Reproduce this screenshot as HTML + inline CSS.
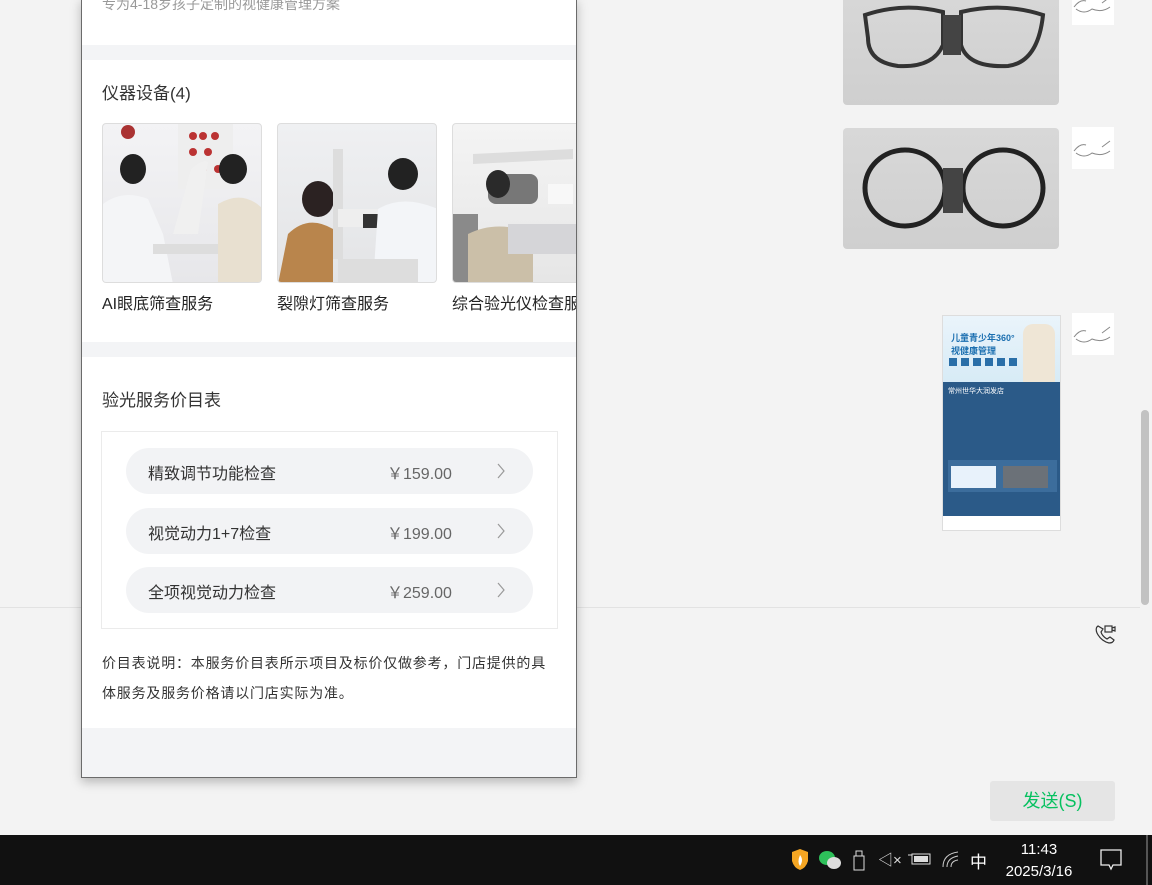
<!DOCTYPE html>
<html><head><meta charset="utf-8"><style>
*{margin:0;padding:0;box-sizing:border-box}
body{width:1152px;height:885px;overflow:hidden;background:#f3f3f3;font-family:"Liberation Sans","Noto Sans CJK SC",sans-serif;position:relative}
.abs{position:absolute}
.phone{left:81px;top:-2px;width:496px;height:780px;background:#fff;border:1px solid #6b6b6b;box-shadow:0 4px 10px rgba(0,0,0,.25);overflow:hidden}
.gray{background:#f3f4f6;left:0;width:100%}
.row{position:absolute;left:24px;width:407px;height:46px;border-radius:23px;background:#f2f3f5;font-size:16px;color:#333}
.row .n{position:absolute;left:22px;top:12px}
.row .p{position:absolute;left:261px;top:12px;color:#666}
.row .c{position:absolute;left:370px;top:15px}
.cap{font-size:16px;color:#222}
.img{width:160px;height:160px;border-radius:4px;border:1px solid #ddd;overflow:hidden}
</style></head><body>
<div class="abs" style="left:0;top:607px;width:1140px;height:1px;background:#e2e2e2"></div>
<div class="abs" style="left:1141px;top:410px;width:8px;height:195px;background:#c2c2c2;border-radius:4px"></div>

<div class="abs" style="left:843px;top:-10px;width:216px;height:115px;background:linear-gradient(#d8d8d8,#cfcfcf);border-radius:4px;overflow:hidden">
<svg width="216" height="115"><g fill="none" stroke="#333" stroke-width="4"><path d="M22 25 Q60 12 100 22 L100 55 Q90 78 55 76 Q25 72 25 48Z"/><path d="M118 22 Q160 12 200 25 Q195 72 165 76 Q125 78 118 55Z"/></g><rect x="100" y="25" width="18" height="40" fill="#444"/></svg></div>
<div class="abs" style="left:843px;top:128px;width:216px;height:121px;background:linear-gradient(#d8d8d8,#cfcfcf);border-radius:4px;overflow:hidden">
<svg width="216" height="121"><g fill="none" stroke="#222" stroke-width="5"><ellipse cx="62" cy="60" rx="40" ry="38"/><ellipse cx="160" cy="60" rx="40" ry="38"/></g><rect x="100" y="40" width="20" height="45" fill="#444"/></svg></div>
<div class="abs" style="left:1072px;top:-17px;width:42px;height:42px;background:#fff"></div>
<div class="abs" style="left:1072px;top:127px;width:42px;height:42px;background:#fff"></div>
<div class="abs" style="left:1072px;top:313px;width:42px;height:42px;background:#fff"></div>
<svg class="abs" style="left:1072px;top:127px" width="42" height="42"><path d="M2 24 Q8 16 14 18 M4 26 Q12 32 20 26 Q30 30 38 24 M30 20 L38 14" stroke="#888" fill="none"/></svg>
<svg class="abs" style="left:1072px;top:313px" width="42" height="42"><path d="M2 24 Q8 16 14 18 M4 26 Q12 32 20 26 Q30 30 38 24 M30 20 L38 14" stroke="#888" fill="none"/></svg>
<svg class="abs" style="left:1072px;top:-17px" width="42" height="42"><path d="M2 24 Q8 16 14 18 M4 26 Q12 32 20 26 Q30 30 38 24 M30 20 L38 14" stroke="#888" fill="none"/></svg>

<div class="abs" style="left:942px;top:315px;width:119px;height:216px;background:#fff;border:1px solid #ddd;overflow:hidden">
<div class="abs" style="left:0;top:0;width:119px;height:66px;background:linear-gradient(#eaf4fb,#d7ebf6)"></div>
<div class="abs" style="left:8px;top:15px;font-size:9px;color:#1b6fb0;font-weight:bold">儿童青少年360°<br>视健康管理</div>
<div class="abs" style="left:6px;top:42px;width:70px;height:8px;background:repeating-linear-gradient(90deg,#2a6fa8 0 8px,transparent 8px 12px)"></div>
<div class="abs" style="left:80px;top:8px;width:32px;height:58px;background:#efe6d6;border-radius:10px 10px 0 0"></div>
<div class="abs" style="left:0;top:66px;width:119px;height:134px;background:#2b5a88"></div>
<div class="abs" style="left:5px;top:70px;font-size:7px;color:#fff">常州世华大润发店</div>
<div class="abs" style="left:5px;top:144px;width:109px;height:32px;background:#3c6d9c"></div>
<div class="abs" style="left:8px;top:150px;width:45px;height:22px;background:#e8f2fb"></div>
<div class="abs" style="left:60px;top:150px;width:45px;height:22px;background:#6b7178"></div>
</div>

<svg class="abs" style="left:1094px;top:623px" width="24" height="22" fill="none" stroke="#333" stroke-width="1.2"><path d="M4 3 Q1 5 3 10 Q7 18 15 20 Q19 20 20 17 L16 14 L13 16 Q8 13 7 9 L9 6 Z"/><rect x="11" y="3" width="7" height="6"/><path d="M18 5 L21 4 L21 8 L18 7"/></svg>
<div class="abs" style="left:990px;top:781px;width:125px;height:40px;background:#e5e5e5;border-radius:3px;color:#07c160;font-size:18px;text-align:center;line-height:40px">发送(S)</div>

<div class="abs phone">
<div class="abs" style="left:20px;top:-5px;font-size:14px;color:#999">专为4-18岁孩子定制的视健康管理方案</div>
<div class="abs gray" style="top:46px;height:15px"></div>
<div class="abs" style="left:20px;top:80px;font-size:17px;color:#333">仪器设备(4)</div>
<div class="abs img" style="left:20px;top:124px;background:linear-gradient(#f3f3f5,#e7e7ea)">
<svg width="160" height="160"><rect x="75" y="0" width="55" height="65" fill="#eee"/><g fill="#b33"><circle cx="90" cy="12" r="4"/><circle cx="100" cy="12" r="4"/><circle cx="112" cy="12" r="4"/><circle cx="90" cy="28" r="4"/><circle cx="105" cy="28" r="4"/><circle cx="100" cy="45" r="4"/><circle cx="115" cy="45" r="4"/></g><circle cx="25" cy="8" r="7" fill="#a33"/><ellipse cx="30" cy="45" rx="13" ry="15" fill="#222"/><path d="M0 80 Q20 65 45 75 L60 110 L70 160 L0 160Z" fill="#f4f5f7"/><path d="M88 45 Q100 35 105 38 L95 110 L70 110Z" fill="#f0f0f0"/><path d="M50 120 L130 120 L130 130 L50 130Z" fill="#ddd"/><ellipse cx="130" cy="45" rx="14" ry="15" fill="#222"/><path d="M115 80 Q140 65 160 85 L160 160 L115 160Z" fill="#e8e0d0"/></svg></div>
<div class="abs img" style="left:195px;top:124px;background:linear-gradient(#eff0f2,#e3e4e6)">
<svg width="160" height="160"><ellipse cx="40" cy="75" rx="16" ry="18" fill="#2b2222"/><path d="M10 110 Q30 90 55 105 L55 160 L0 160Z" fill="#b9854c"/><rect x="55" y="25" width="10" height="110" fill="#ddd"/><rect x="60" y="85" width="50" height="18" fill="#eee"/><rect x="85" y="90" width="20" height="14" fill="#333"/><ellipse cx="125" cy="50" rx="15" ry="16" fill="#222"/><path d="M100 85 Q125 70 160 85 L160 160 L95 160Z" fill="#f3f5f8"/><rect x="60" y="135" width="80" height="25" fill="#ddd"/></svg></div>
<div class="abs img" style="left:370px;top:124px;width:130px;background:linear-gradient(#f4f4f4,#e6e6e6)">
<svg width="130" height="160"><path d="M20 30 L120 25 L120 35 L20 40Z" fill="#ddd"/><rect x="35" y="50" width="50" height="30" rx="8" fill="#777"/><ellipse cx="45" cy="60" rx="12" ry="14" fill="#2a2a2a"/><rect x="0" y="90" width="25" height="70" fill="#8a8a8a"/><path d="M15 110 Q45 95 80 110 L80 160 L15 160Z" fill="#cbbfa8"/><rect x="55" y="100" width="75" height="30" fill="#d5d5d8"/><rect x="95" y="60" width="25" height="20" fill="#f8f8f8"/></svg></div>
<div class="abs cap" style="left:20px;top:291px">AI眼底筛查服务</div>
<div class="abs cap" style="left:195px;top:291px">裂隙灯筛查服务</div>
<div class="abs cap" style="left:370px;top:291px;white-space:nowrap">综合验光仪检查服务</div>
<div class="abs gray" style="top:343px;height:15px"></div>
<div class="abs" style="left:20px;top:387px;font-size:17px;color:#333">验光服务价目表</div>
<div class="abs" style="left:19px;top:432px;width:457px;height:198px;border:1px solid #ebebeb">
<div class="row" style="top:16px"><span class="n">精致调节功能检查</span><span class="p">￥159.00</span><svg class="c" width="10" height="16"><path d="M2 1 L8 8 L2 15" stroke="#999" fill="none" stroke-width="1.2"/></svg></div>
<div class="row" style="top:76px"><span class="n">视觉动力1+7检查</span><span class="p">￥199.00</span><svg class="c" width="10" height="16"><path d="M2 1 L8 8 L2 15" stroke="#999" fill="none" stroke-width="1.2"/></svg></div>
<div class="row" style="top:135px"><span class="n">全项视觉动力检查</span><span class="p">￥259.00</span><svg class="c" width="10" height="16"><path d="M2 1 L8 8 L2 15" stroke="#999" fill="none" stroke-width="1.2"/></svg></div>
</div>
<div class="abs" style="left:20px;top:649px;width:470px;font-size:14px;color:#333;line-height:30px;white-space:nowrap;letter-spacing:0.8px">价目表说明：本服务价目表所示项目及标价仅做参考，门店提供的具<br>体服务及服务价格请以门店实际为准。</div>
<div class="abs gray" style="top:729px;height:60px"></div>
</div>

<div class="abs" style="left:0;top:835px;width:1152px;height:50px;background:#111"></div>
<svg class="abs" style="left:790px;top:849px" width="20" height="22"><path d="M2 3 L10 0 L18 3 L18 12 Q16 19 10 21 Q4 19 2 12Z" fill="#f5a623"/><path d="M10 6 Q14 11 10 17 Q7 13 10 6" fill="#fff"/></svg>
<svg class="abs" style="left:818px;top:849px" width="24" height="22"><ellipse cx="9" cy="9" rx="8" ry="7" fill="#2ec05a"/><ellipse cx="16" cy="14" rx="7" ry="6" fill="#ddd"/></svg>
<svg class="abs" style="left:851px;top:850px" width="16" height="22" fill="none" stroke="#ddd"><rect x="5" y="1" width="6" height="5"/><rect x="3" y="6" width="10" height="14"/></svg>
<div class="abs" style="left:878px;top:849px;color:#ddd;font-size:15px">◁×</div>
<svg class="abs" style="left:908px;top:851px" width="24" height="16"><rect x="4" y="3" width="18" height="10" fill="none" stroke="#ddd"/><rect x="6" y="5" width="14" height="6" fill="#ddd"/><path d="M0 4 L4 4" stroke="#ddd"/></svg>
<svg class="abs" style="left:941px;top:850px" width="20" height="18" fill="none" stroke="#ccc"><path d="M2 17 Q2 4 17 2 M6 17 Q6 8 17 6 M10 17 Q10 11 17 10"/></svg>
<div class="abs" style="left:970px;top:848px;color:#fff;font-size:17px">中</div>
<div class="abs" style="left:998px;top:839px;width:82px;color:#fff;font-size:15px;text-align:center;line-height:22px">11:43<br>2025/3/16</div>
<svg class="abs" style="left:1100px;top:849px" width="22" height="22" fill="none" stroke="#eee" stroke-width="1.3"><path d="M1 1 H21 V16 H13 L11 20 L9 16 H1Z"/></svg>
<div class="abs" style="left:1146px;top:835px;width:2px;height:50px;background:#555"></div>
</body></html>
